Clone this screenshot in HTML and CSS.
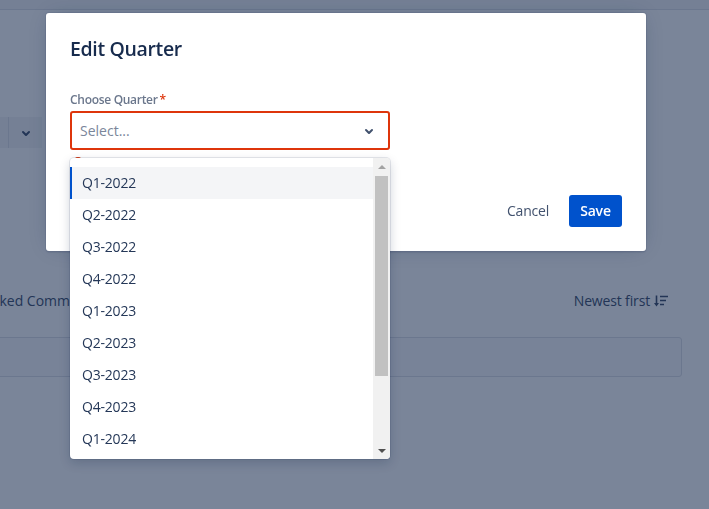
FILE: index.html
```html
<!DOCTYPE html>
<html lang="en">
<head>
<meta charset="utf-8">
<title>Edit Quarter</title>
<link rel="stylesheet" href="styles.css">
</head>
<body>
<div class="page">
  <div class="topbar"></div>
  <div class="toolbar">
    <div class="seg">
      <div class="seg-btn">
        <svg class="chev" width="24" height="24" viewBox="0 0 24 24"><path d="M8.292 10.293a1.009 1.009 0 000 1.419l2.939 2.965c.218.215.5.322.779.322s.556-.107.769-.322l2.93-2.955a1.01 1.01 0 000-1.419.987.987 0 00-1.406 0l-2.298 2.317-2.307-2.327a.99.99 0 00-1.406 0z" fill="currentColor"/></svg>
      </div>
    </div>
  </div>
  <div class="comments-head">
    <span class="tab">Linked Comments</span>
    <span class="sort">Newest first
      <svg width="14" height="12" viewBox="0 0 14 12"><path d="M2.5 0.5v9" stroke="currentColor" stroke-width="1.6" fill="none"/><path d="M0 8h5l-2.5 3.5z" fill="currentColor"/><path d="M6 1.5h8M6 5.5h6M6 9.5h4" stroke="currentColor" stroke-width="1.6" fill="none"/></svg>
    </span>
  </div>
  <div class="comment-box"></div>
</div>

<div class="overlay">
  <div class="modal">
    <h1 class="title">Edit Quarter</h1>
    <div class="field">
      <div class="label">Choose Quarter<span class="req">*</span></div>
      <div class="select-wrap">
        <div class="select">
          <span class="placeholder">Select...</span>
          <svg class="chev" width="24" height="24" viewBox="0 0 24 24"><path d="M8.292 10.293a1.009 1.009 0 000 1.419l2.939 2.965c.218.215.5.322.779.322s.556-.107.769-.322l2.93-2.955a1.01 1.01 0 000-1.419.987.987 0 00-1.406 0l-2.298 2.317-2.307-2.327a.99.99 0 00-1.406 0z" fill="currentColor"/></svg>
        </div>
        <div class="error"><span class="err-icon"></span></div>
        <div class="menu">
          <div class="menu-list">
            <div class="option focused">Q1-2022</div>
            <div class="option">Q2-2022</div>
            <div class="option">Q3-2022</div>
            <div class="option">Q4-2022</div>
            <div class="option">Q1-2023</div>
            <div class="option">Q2-2023</div>
            <div class="option">Q3-2023</div>
            <div class="option">Q4-2023</div>
            <div class="option">Q1-2024</div>
            <div class="option">Q2-2024</div>
          </div>
          <div class="scrollbar">
            <div class="sb-btn"><span class="arrow-up"></span></div>
            <div class="sb-track"><div class="sb-thumb"></div></div>
            <div class="sb-btn"><span class="arrow-down"></span></div>
          </div>
        </div>
      </div>
    </div>
    <div class="footer">
      <button class="btn btn-subtle">Cancel</button>
      <button class="btn btn-primary">Save</button>
    </div>
  </div>
</div>
</body>
</html>
```

FILE: styles.css
```css
* { box-sizing: border-box; }

html, body {
  margin: 0;
  padding: 0;
  width: 709px;
  height: 509px;
  overflow: hidden;
  background: #ffffff;
  font-family: "Open Sans", "Noto Sans", "Liberation Sans", sans-serif;
  color: #172b4d;
}

/* ---------- page underneath ---------- */
.page {
  width: 709px;
  height: 509px;
}

.topbar {
  height: 10px;
  background: #f4f5f7;
  border-bottom: 1px solid #dfe1e6;
}

.toolbar {
  margin-top: 107px;
  height: 31px;
  display: flex;
}

.seg {
  width: 42px;
  height: 31px;
  background: #f4f5f7;
  padding-left: 8px;
}

.seg-btn {
  height: 31px;
  border-left: 1px solid #dfe1e6;
  display: flex;
  align-items: center;
  justify-content: center;
  color: #42526e;
}

.comments-head {
  margin-top: 143px;
  height: 20px;
  display: flex;
  justify-content: space-between;
  align-items: center;
  padding-right: 41px;
  font-size: 14px;
  line-height: 20px;
  font-weight: 500;
  color: #42526e;
}

.tab {
  margin-left: -20px;
}

.sort {
  display: flex;
  align-items: center;
  gap: 4px;
  letter-spacing: -0.15px;
}

.comment-box {
  margin-top: 26px;
  margin-left: -10px;
  width: 692px;
  height: 40px;
  border: 1px solid #dfe1e6;
  border-radius: 3px;
  background: #fafbfc;
}

/* ---------- overlay + modal ---------- */
.overlay {
  position: fixed;
  inset: 0;
  background: rgba(9, 30, 66, 0.54);
  padding: 13px 0 0 46px;
}

.modal {
  width: 600px;
  background: #ffffff;
  border-radius: 3px;
  padding: 22px 24px 24px;
  box-shadow: 0 0 0 1px rgba(9, 30, 66, 0.08), 0 2px 1px rgba(9, 30, 66, 0.08), 0 0 20px -6px rgba(9, 30, 66, 0.31);
}

.title {
  margin: 0;
  font-size: 19.5px;
  line-height: 28px;
  font-weight: 600;
  letter-spacing: -0.35px;
  color: #172b4d;
}

.field {
  margin-top: 29px;
}

.label {
  font-size: 12px;
  line-height: 16px;
  font-weight: 600;
  letter-spacing: -0.3px;
  color: #6b778c;
  margin-bottom: 3px;
}

.req {
  color: #de350b;
  padding-left: 2px;
}

.select-wrap {
  position: relative;
  width: 320px;
}

.select {
  height: 39px;
  border: 2px solid #de350b;
  border-radius: 3px;
  background: #ffffff;
  display: flex;
  align-items: center;
  justify-content: space-between;
  padding: 0 7px 0 8px;
}

.placeholder {
  font-size: 14px;
  color: #7a869a;
}

.chev {
  color: #42526e;
  display: block;
}

.error {
  margin-top: 7px;
  height: 16px;
}

.err-icon {
  display: block;
  width: 10px;
  height: 10px;
  margin-left: 3px;
  border-radius: 50%;
  background: #de350b;
}

/* ---------- dropdown menu ---------- */
.menu {
  position: absolute;
  top: 47px;
  left: 0;
  width: 320px;
  height: 301px;
  background: #ffffff;
  border-radius: 4px;
  overflow: hidden;
  display: flex;
  box-shadow: 0 0 0 1px rgba(9, 30, 66, 0.1), 0 4px 11px rgba(9, 30, 66, 0.2);
}

.menu-list {
  flex: 1;
  overflow: hidden;
  padding-top: 9px;
}

.option {
  height: 32px;
  line-height: 32px;
  padding-left: 12px;
  font-size: 14px;
  letter-spacing: -0.2px;
  color: #253858;
}

.option.focused {
  background: #f4f5f7;
  border-left: 2px solid #0052cc;
  padding-left: 10px;
}

.scrollbar {
  width: 17px;
  background: #f1f1f1;
  display: flex;
  flex-direction: column;
}

.sb-btn {
  height: 17px;
  display: flex;
  align-items: center;
  justify-content: center;
}

.arrow-up {
  width: 0;
  height: 0;
  border-left: 4px solid transparent;
  border-right: 4px solid transparent;
  border-bottom: 4px solid #a3a3a3;
}

.arrow-down {
  width: 0;
  height: 0;
  border-left: 4px solid transparent;
  border-right: 4px solid transparent;
  border-top: 4px solid #505050;
}

.sb-track {
  flex: 1;
  padding: 1px 2px 0;
}

.sb-thumb {
  height: 200px;
  background: #c1c1c1;
}

/* ---------- footer ---------- */
.footer {
  margin-top: 22px;
  display: flex;
  justify-content: flex-end;
  gap: 8px;
}

.btn {
  height: 32px;
  border: none;
  border-radius: 3px;
  font-family: inherit;
  font-size: 14px;
  line-height: 32px;
  cursor: pointer;
  padding: 0;
}

.btn-subtle {
  width: 66px;
  background: transparent;
  color: #42526e;
  font-weight: 500;
  letter-spacing: -0.2px;
}

.btn-primary {
  width: 53px;
  background: #0052cc;
  color: #ffffff;
  font-weight: 600;
  letter-spacing: -0.2px;
}
```
